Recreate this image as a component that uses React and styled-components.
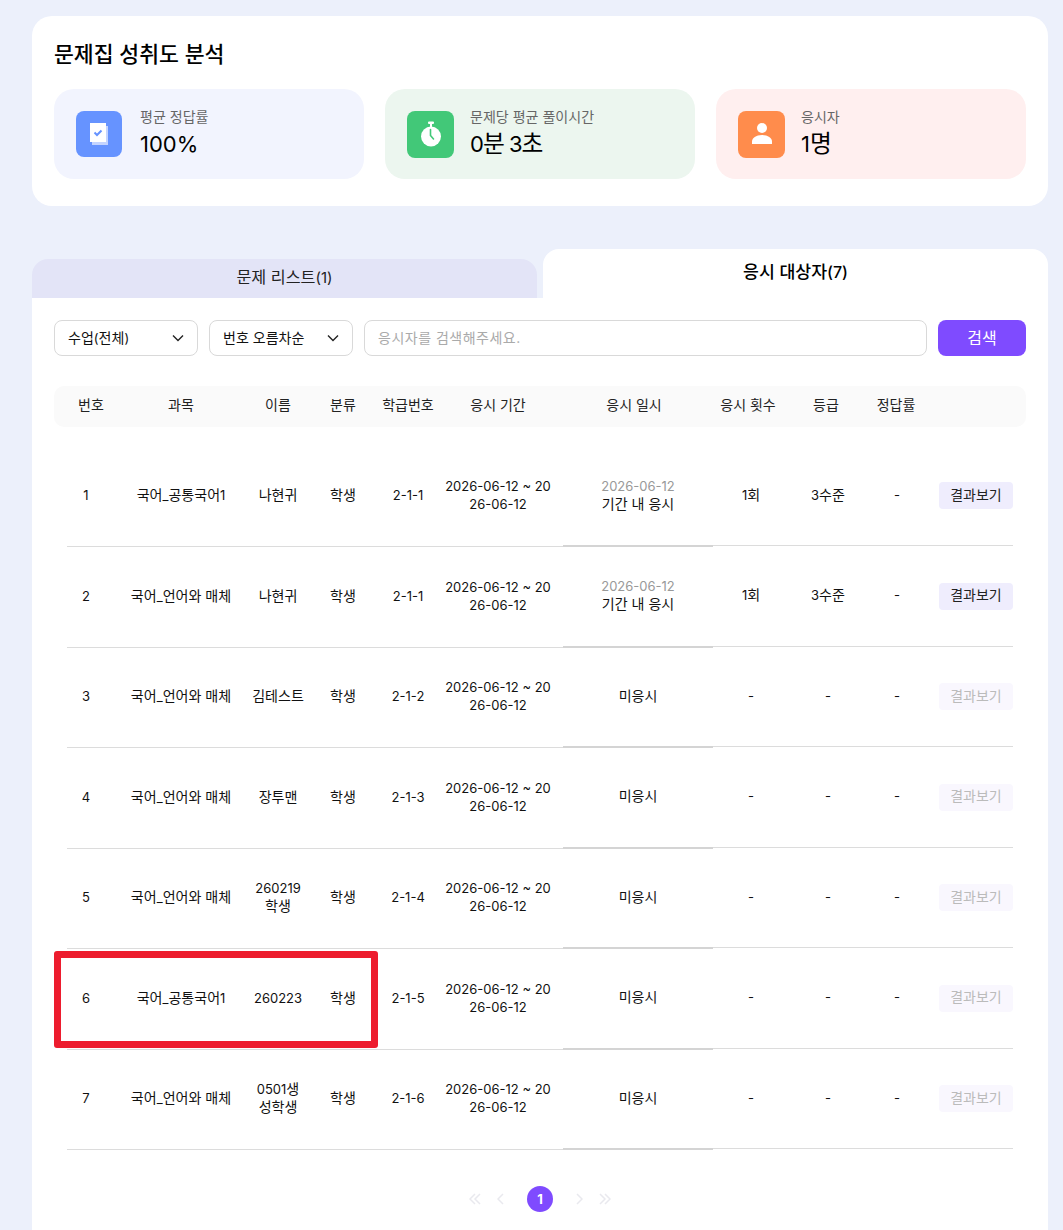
import React from "react";
import styled, { createGlobalStyle } from "styled-components";

const Global = createGlobalStyle`
  html, body { margin: 0; padding: 0; height: 1230px; overflow: hidden; background: #ecf0fb; }
  * { box-sizing: border-box; }
  body { font-family: Inter, "Noto Sans CJK KR", sans-serif; color: #111; font-size: 13px; }
`;

const Ko = styled.span`
  font-size: 1.08em;
`;
const T = ({ children }) =>
  children.split(/([\uAC00-\uD7A3]+(?: [\uAC00-\uD7A3]+)*)/).map((part, i) =>
    i % 2 ? <Ko key={i}>{part}</Ko> : part
  );

const Page = styled.div`
  padding: 16px 15px 0 32px;
  display: flex;
  flex-direction: column;
`;
const SummaryCard = styled.section`
  background: #fff;
  border-radius: 20px;
  padding: 23px 22px 27px;
  height: 190px;
`;
const Title = styled.h2`
  margin: 0 0 18px;
  font-size: 20px;
  line-height: 31px;
  font-weight: 500;
  color: #000;
`;
const StatRow = styled.div`
  display: flex;
  gap: 21px;
`;
const Stat = styled.div`
  flex: 1;
  height: 90px;
  border-radius: 20px;
  background: ${p => p.$bg};
  display: flex;
  align-items: center;
  gap: ${p => p.$gap || 16}px;
  padding: 0 22px;
`;
const IconBox = styled.div`
  width: ${p => p.$size || 47}px;
  height: ${p => p.$size || 47}px;
  border-radius: 8px;
  background: ${p => p.$bg};
  display: flex;
  align-items: center;
  justify-content: center;
  flex: none;
`;
const StatText = styled.div`
  display: flex;
  flex-direction: column;
  gap: 4px;
  padding-bottom: 2px;
`;
const StatLabel = styled.div`
  font-size: 13px;
  line-height: 18px;
  color: #666;
`;
const StatValue = styled.div`
  font-size: 22px;
  line-height: 28px;
  font-weight: 400;
  color: #000;
  letter-spacing: ${p => (p.$tight ? "-1px" : "0")};
`;
const Tabs = styled.div`
  margin-top: 43px;
  display: flex;
  align-items: flex-end;
  gap: 6px;
  height: 49px;
`;
const Tab = styled.div`
  flex: 1;
  height: ${p => (p.$active ? 49 : 39)}px;
  background: ${p => (p.$active ? "#fff" : "#e3e4f7")};
  border-radius: 16px 16px 0 0;
  text-align: center;
  font-size: ${p => (p.$active ? 16 : 15)}px;
  font-weight: ${p => (p.$active ? 500 : 400)};
  color: ${p => (p.$active ? "#000" : "#222")};
  line-height: ${p => (p.$active ? 45 : 37)}px;
`;
const Panel = styled.section`
  background: #fff;
  padding: 22px 22px 60px;
`;
const Filters = styled.div`
  display: flex;
  gap: 11px;
  height: 36px;
`;
const Select = styled.div`
  width: ${p => p.$w}px;
  border: 1px solid #d9d9d9;
  border-radius: 8px;
  display: flex;
  align-items: center;
  justify-content: space-between;
  padding: 0 11px 0 13px;
  color: #111;
  flex: none;
`;
const SelectText = styled.span`
  margin-bottom: 3px;
`;
const SearchInput = styled.input`
  flex: 1;
  min-width: 0;
  border: 1px solid #d9d9d9;
  border-radius: 8px;
  padding: 0 13px 1px;
  font: inherit;
  font-size: 14px;
  letter-spacing: 0.5px;
  outline: none;
  &::placeholder { color: #aaa; opacity: 1; }
`;
const SearchButton = styled.button`
  width: 88px;
  border: 0;
  border-radius: 8px;
  background: #7f4bff;
  color: #fff;
  font: inherit;
  font-size: 16px;
  padding: 0 0 3px;
  flex: none;
`;
const HeaderRow = styled.div`
  margin-top: 30px;
  height: 41px;
  background: #fafafa;
  border-radius: 10px;
  display: grid;
  grid-template-columns: 74px 106px 88px 42px 88px 92px 180px 48px 108px 32px 1fr;
  align-items: center;
  text-align: center;
  font-size: 14px;
  color: #222;
  padding-bottom: 5px;
`;
const HeadCell = styled.div`
  white-space: nowrap;
  display: flex;
  justify-content: center;
`;
const Rows = styled.div`
  margin: 19.5px 13px 0;
  display: flex;
  flex-direction: column;
`;
const Row = styled.div`
  position: relative;
  height: 100.5px;
  display: grid;
  grid-template-columns: 42px 144px 50px 80px 50px 130px 150px 76px 78px 60px 1fr;
  text-align: center;
  font-size: 13px;
  line-height: 18px;
  color: #111;
`;
const Cell = styled.div`
  display: flex;
  align-items: center;
  justify-content: ${p => (p.$end ? "flex-end" : "center")};
  padding: ${p => p.$pad || "0 0 2px"};
  word-break: ${p => (p.$breakAll ? "break-all" : "keep-all")};
  border-bottom: ${p => (p.$thick ? "2px solid #d4d4d4" : "1px solid #dcdcdc")};
  margin-bottom: ${p => (p.$raised ? 1 : 0)}px;
  min-width: 0;
`;
const DateStack = styled.div`
  display: flex;
  flex-direction: column;
`;
const DateGrey = styled.span`
  color: #999;
`;
const ResultButton = styled.button`
  width: 74px;
  height: 27px;
  border: 0;
  border-radius: 4px;
  padding: 0 0 2px;
  background: ${p => (p.$off ? "#f9f7fe" : "#efedfd")};
  color: ${p => (p.$off ? "#bbb" : "#222")};
  font: inherit;
  font-size: 14px;
`;
const Highlight = styled.div`
  position: absolute;
  left: -13px;
  top: 1.5px;
  width: 324px;
  height: 97px;
  border: 7px solid #ed1c2e;
  border-radius: 3px;
  pointer-events: none;
`;
const Pager = styled.div`
  margin-top: 35.5px;
  display: flex;
  justify-content: center;
  align-items: center;
  height: 26px;
`;
const PageGlyph = styled.span`
  display: flex;
  margin: ${p => p.$m};
`;
const PageNum = styled.div`
  width: 26px;
  height: 26px;
  border-radius: 50%;
  background: #7f4bff;
  color: #fff;
  font-size: 13px;
  font-weight: 700;
  display: flex;
  align-items: center;
  justify-content: center;
`;

const Chevron = () => (
  <svg width="16" height="16" viewBox="0 0 16 16" fill="none" stroke="#222" strokeWidth="1.4">
    <path d="M3 5.5 8 10.5 13 5.5" />
  </svg>
);
const PagerIcon = ({ d, w = 10 }) => (
  <svg width={w} height="12" viewBox={`0 0 ${w} 12`} fill="none" stroke="#e9e9ee" strokeWidth="1.5">
    <path d={d} />
  </svg>
);
const DocIcon = () => (
  <svg width="20" height="24" viewBox="0 0 20 24">
    <rect x="3" y="4" width="16" height="19" fill="#c4d4ff" />
    <rect x="1" y="1" width="16" height="19" fill="#fff" />
    <path d="M5.5 10.5 8 13 12.5 8.5" fill="none" stroke="#6693ff" strokeWidth="2" />
  </svg>
);
const TimerIcon = () => (
  <svg width="22" height="26" viewBox="0 0 22 26">
    <rect x="8" y="0.5" width="6" height="2.5" rx="1" fill="#fff" />
    <rect x="10" y="2.5" width="2" height="4" fill="#fff" />
    <circle cx="11" cy="15.5" r="10" fill="#fff" />
    <path d="M10.5 8.5V14.5L13.5 18" fill="none" stroke="#42c878" strokeWidth="1.6" strokeLinecap="round" />
  </svg>
);
const PersonIcon = () => (
  <svg width="22" height="22" viewBox="0 0 22 22" fill="#fff">
    <circle cx="11" cy="5" r="5" />
    <path d="M1 21v-2.5C1 15 5 12 11 12s10 3 10 6.5V21Z" />
  </svg>
);

const data = [
  ["1", "국어_공통국어1", "나현귀", "2-1-1", true],
  ["2", "국어_언어와 매체", "나현귀", "2-1-1", true],
  ["3", "국어_언어와 매체", "김테스트", "2-1-2", false],
  ["4", "국어_언어와 매체", "장투맨", "2-1-3", false],
  ["5", "국어_언어와 매체", "260219 학생", "2-1-4", false],
  ["6", "국어_공통국어1", "260223", "2-1-5", false],
  ["7", "국어_언어와 매체", "0501생 성학생", "2-1-6", false],
];
const heads = ["번호", "과목", "이름", "분류", "학급번호", "응시 기간", "응시 일시", "응시 횟수", "등급", "정답률", ""];

export default function App() {
  return (
    <Page>
      <Global />
      <SummaryCard>
        <Title><T>문제집 성취도 분석</T></Title>
        <StatRow>
          <Stat $bg="#f2f4fe" $gap={18}>
            <IconBox $bg="#6693ff" $size={46}><DocIcon /></IconBox>
            <StatText><StatLabel><T>평균 정답률</T></StatLabel><StatValue>100%</StatValue></StatText>
          </Stat>
          <Stat $bg="#ecf6ef">
            <IconBox $bg="#42c878"><TimerIcon /></IconBox>
            <StatText><StatLabel><T>문제당 평균 풀이시간</T></StatLabel><StatValue $tight><T>0분 3초</T></StatValue></StatText>
          </Stat>
          <Stat $bg="#ffefef">
            <IconBox $bg="#ff8c4c"><PersonIcon /></IconBox>
            <StatText><StatLabel><T>응시자</T></StatLabel><StatValue><T>1명</T></StatValue></StatText>
          </Stat>
        </StatRow>
      </SummaryCard>
      <Tabs>
        <Tab><T>문제 리스트(1)</T></Tab>
        <Tab $active><T>응시 대상자(7)</T></Tab>
      </Tabs>
      <Panel>
        <Filters>
          <Select $w={144}><SelectText><T>수업(전체)</T></SelectText><Chevron /></Select>
          <Select $w={144}><SelectText><T>번호 오름차순</T></SelectText><Chevron /></Select>
          <SearchInput placeholder="응시자를 검색해주세요." />
          <SearchButton>검색</SearchButton>
        </Filters>
        <HeaderRow>
          {heads.map((h, i) => <HeadCell key={i}>{h}</HeadCell>)}
        </HeaderRow>
        <Rows>
          {data.map(([n, subject, name, cls, done]) => (
            <Row key={n}>
              <Cell $pad="0 4px 2px 0">{n}</Cell>
              <Cell><span><T>{subject}</T></span></Cell>
              <Cell><span><T>{name}</T></span></Cell>
              <Cell><Ko>학생</Ko></Cell>
              <Cell>{cls}</Cell>
              <Cell $breakAll $pad="0 9px 2px">2026-06-12 ~ 2026-06-12</Cell>
              <Cell $thick>
                {done ? (
                  <DateStack><DateGrey>2026-06-12</DateGrey><Ko>기간 내 응시</Ko></DateStack>
                ) : <Ko>미응시</Ko>}
              </Cell>
              <Cell $raised>{done ? <span><T>1회</T></span> : "-"}</Cell>
              <Cell $raised>{done ? <span><T>3수준</T></span> : "-"}</Cell>
              <Cell $raised>-</Cell>
              <Cell $raised $end $pad="0"><ResultButton $off={!done}>결과보기</ResultButton></Cell>
              {n === "6" && <Highlight />}
            </Row>
          ))}
        </Rows>
        <Pager>
          <PageGlyph $m="0 16px 0 0"><PagerIcon w={12} d="M6 1 1 6l5 5M11 1 6 6l5 5" /></PageGlyph>
          <PageGlyph $m="0 23px 0 0"><PagerIcon w={7} d="M6 1 1 6l5 5" /></PageGlyph>
          <PageNum>1</PageNum>
          <PageGlyph $m="0 0 0 23px"><PagerIcon w={7} d="M1 1l5 5-5 5" /></PageGlyph>
          <PageGlyph $m="0 0 0 16px"><PagerIcon w={12} d="M1 1l5 5-5 5M6 1l5 5-5 5" /></PageGlyph>
        </Pager>
      </Panel>
    </Page>
  );
}
